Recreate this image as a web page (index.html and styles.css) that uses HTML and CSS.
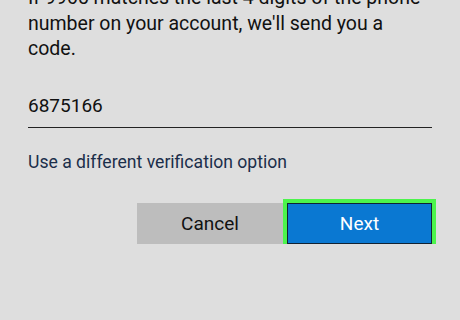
FILE: index.html
```html
<!DOCTYPE html>
<html lang="en">

<head>
    <meta charset="UTF-8">
    <meta name="viewport" content="width=device-width, initial-scale=1.0">
    <title>Verify your identity</title>
    <link rel="stylesheet" href="styles.css">
</head>

<body>
    <div class="panel">
        <p class="intro">If 9965 matches the last 4 digits of the phone<br>number on your account, we'll send you a<br>code.</p>
        <div class="code-field">6875166</div>
        <a class="other-option" href="#">Use a different verification option</a>
        <div class="actions">
            <button class="btn btn-cancel">Cancel</button>
            <button class="btn btn-next">Next</button>
        </div>
    </div>
</body>

</html>
```

FILE: styles.css
```css
body {
    margin: 0;
    background-color: #dedede;
    font-family: Roboto, "Liberation Sans", Arial, sans-serif;
    color: #111;
    overflow: hidden;
}

.panel {
    width: 404px;
    padding-left: 28px;
}

.intro {
    font-size: 19.5px;
    line-height: 25.5px;
    margin: -15px 0 0 0;
    white-space: nowrap;
}

.code-field {
    font-size: 19px;
    margin-top: 32px;
    padding-bottom: 10px;
    border-bottom: 1.5px solid #222;
}

.other-option {
    display: block;
    margin-top: 24px;
    font-size: 17.6px;
    color: #1b2e4a;
    text-decoration: none;
}

.actions {
    display: flex;
    justify-content: flex-end;
    gap: 4px;
    margin-top: 31px;
}

.btn {
    width: 146px;
    height: 41px;
    border: none;
    font-family: Roboto, "Liberation Sans", Arial, sans-serif;
    font-size: 19px;
    cursor: pointer;
}

.btn-cancel {
    background-color: #bdbdbd;
    color: #111;
}

.btn-next {
    width: 145px;
    background-color: #0a78d2;
    color: #fff;
    border: 1px solid #123;
    outline: 4px solid #4cf44c;
}
```
